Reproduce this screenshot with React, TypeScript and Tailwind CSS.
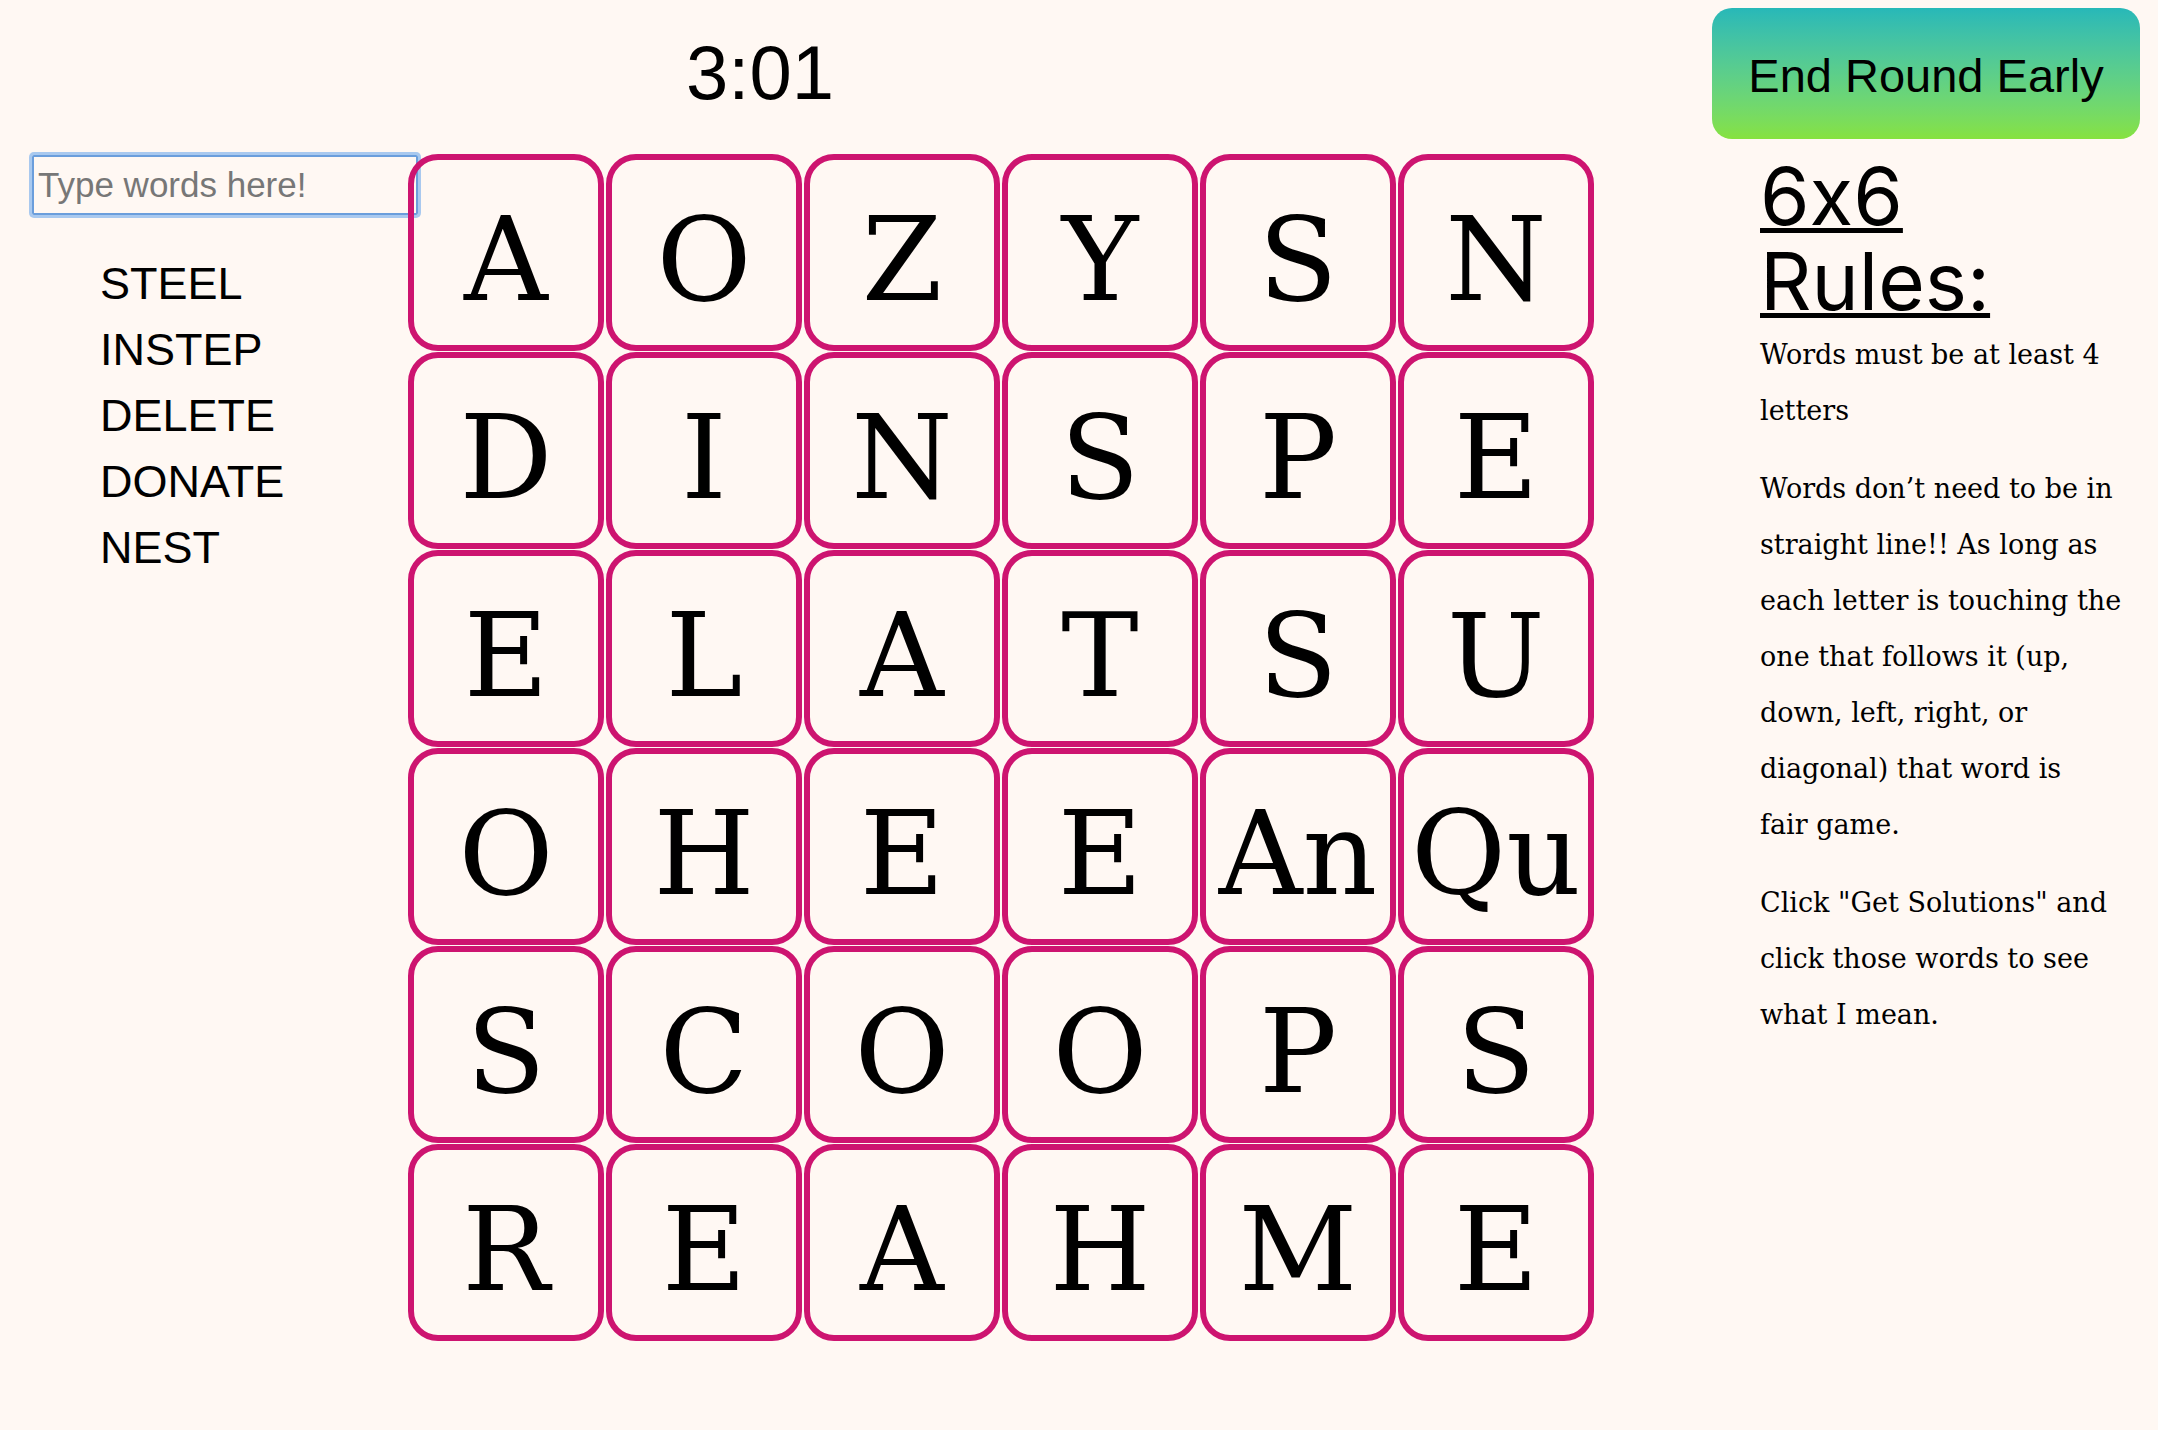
const GRID: string[][] = [
  ["A", "O", "Z", "Y", "S", "N"],
  ["D", "I", "N", "S", "P", "E"],
  ["E", "L", "A", "T", "S", "U"],
  ["O", "H", "E", "E", "An", "Qu"],
  ["S", "C", "O", "O", "P", "S"],
  ["R", "E", "A", "H", "M", "E"],
];

const FOUND = ["STEEL", "INSTEP", "DELETE", "DONATE", "NEST"];

function Tile({ letter }: { letter: string }) {
  return (
    <div className="flex h-[197px] w-[196px] shrink-0 items-center justify-center rounded-[30px] border-[6px] border-[#cd1470] pt-[14px] font-['DejaVu_Serif',serif] text-[116px] leading-none text-black">
      {letter}
    </div>
  );
}

export default function App() {
  return (
    <div className="min-h-screen w-full bg-[#fff8f3] font-['Liberation_Sans',Arial,sans-serif] text-black">
      <div className="flex">
        {/* Left: input + found words */}
        <div className="w-[408px] shrink-0 pt-[155px]">
          <input
            type="text"
            placeholder="Type words here!"
            className="ml-[32px] block h-[60px] w-[386px] rounded-[2px] border-2 border-[#6b9edc] bg-transparent pl-[4px] text-[35px] shadow-[0_0_0_3px_rgba(140,185,238,0.75)] outline-none placeholder:text-[#777]"
          />
          <ul className="mt-[36px] pl-[100px] text-[45px] leading-[66px]">
            {FOUND.map((w) => (
              <li key={w}>{w}</li>
            ))}
          </ul>
        </div>

        {/* Middle: timer + board */}
        <div className="w-[1186px] shrink-0">
          <div className="h-[154px] pl-[278px] pt-[29px] text-[76px] leading-[87px]">3:01</div>
          <div className="flex flex-col gap-[1px]">
            {GRID.map((row, r) => (
              <div key={r} className="flex gap-[2px]">
                {row.map((l, c) => (
                  <Tile key={c} letter={l} />
                ))}
              </div>
            ))}
          </div>
        </div>

        {/* Right: button + rules */}
        <div className="ml-[118px] w-[428px] shrink-0">
          <button className="mt-[8px] flex h-[131px] w-full items-center justify-center rounded-[20px] bg-linear-to-b from-[#27b8b8] to-[#86e23e] pt-[5px] text-[47px] text-black">
            End Round Early
          </button>
          <div className="ml-[48px] mt-[14px] w-[366px]">
            <h1 className="font-['Inter',sans-serif] text-[80px] font-normal leading-[85px] underline decoration-[5px] underline-offset-[3px] [font-feature-settings:'calt'_0]">
              6x6 Rules:
            </h1>
            <div className="mt-[4px] font-['DejaVu_Serif',serif] text-[27px] leading-[56px]">
              <p className="mb-[22px]">Words must be at least 4 letters</p>
              <p className="mb-[22px]">
                Words don’t need to be in straight line!! As long as each letter is touching the one that follows it (up,
                down, left, right, or diagonal) that word is
                <br />
                fair game.
              </p>
              <p className="mb-[22px]">Click "Get Solutions" and click those words to see what I mean.</p>
            </div>
          </div>
        </div>
      </div>
    </div>
  );
}
